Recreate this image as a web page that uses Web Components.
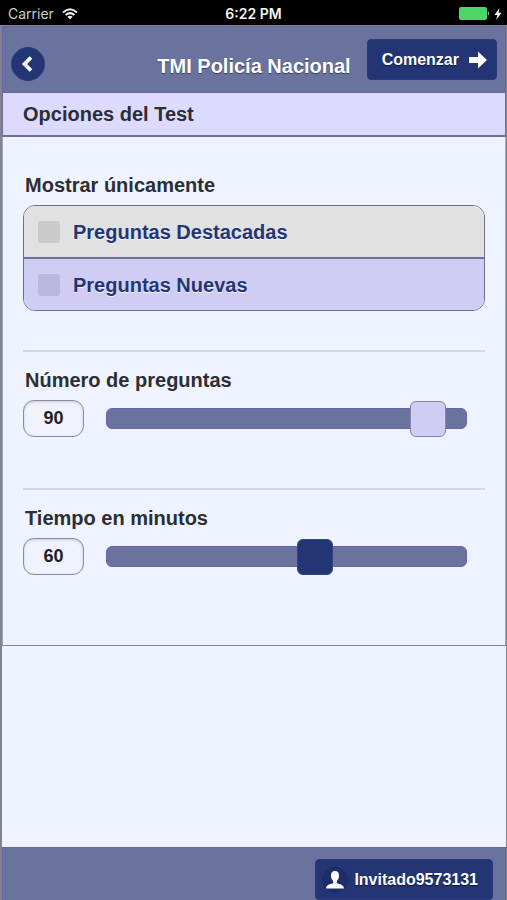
<!DOCTYPE html>
<html lang="es">
<head>
<meta charset="utf-8">
<meta name="viewport" content="width=device-width, initial-scale=1">
<title>TMI Policía Nacional</title>
<style>
  :root {
    --bar: #6a739e;
    --bar-edge: #6a63ab;
    --navy: #233575;
    --page: #eef3ff;
    --strip: #dcdbff;
    --lilac: #d0cdf5;
    --edge: #716f98;
    --frame: #83838f;
    --ink: #2c2e33;
  }
  body { margin: 0; background: var(--page); color: var(--ink); font: bold 20px/24px "Liberation Sans", Arial, sans-serif; }
</style>
</head>
<body>
<test-app>
  <status-bar slot="status" carrier="Carrier" time="6:22 PM"></status-bar>
  <app-header slot="header">
    <icon-button slot="back" icon="back" label="Volver"></icon-button>
    TMI Policía Nacional
    <icon-button slot="action" icon="forward">Comenzar</icon-button>
  </app-header>
  <options-panel>
    <span slot="heading">Opciones del Test</span>
    <option-section>
      <span slot="title">Mostrar únicamente</span>
      <check-list>
        <check-row>Preguntas Destacadas</check-row>
        <check-row class="selected">Preguntas Nuevas</check-row>
      </check-list>
    </option-section>
    <option-section class="ruled">
      <span slot="title">Número de preguntas</span>
      <value-slider value="90" label="Número de preguntas" class="light"></value-slider>
    </option-section>
    <option-section class="ruled">
      <span slot="title">Tiempo en minutos</span>
      <value-slider value="60" label="Tiempo en minutos"></value-slider>
    </option-section>
  </options-panel>
  <app-footer slot="footer">
    <icon-button icon="user">Invitado9573131</icon-button>
  </app-footer>
</test-app>
<script>
const define = (name, render, ready) => customElements.define(name, class extends HTMLElement {
  constructor() {
    super();
    this.attachShadow({ mode: "open" }).innerHTML =
      "<style>*{box-sizing:border-box}:host{display:block;box-sizing:border-box}</style>" + render(this);
    if (ready) ready(this.shadowRoot, this);
  }
});

define("test-app", () => `
  <style>
    :host { display: flex; flex-direction: column; min-height: 100vh; }
    .frame { flex: 1; display: flex; flex-direction: column; border: solid var(--frame); border-width: 1px 1px 0 2px; }
    main { flex: 1; }
  </style>
  <slot name="status"></slot>
  <div class="frame">
    <slot name="header"></slot>
    <main><slot></slot></main>
    <slot name="footer"></slot>
  </div>`);

define("status-bar", el => `
  <style>
    :host { display: grid; grid-template-columns: 1fr auto 1fr; align-items: center; height: 25px; padding: 2px 5px 0 5px;
      background: #000; color: #f4f4f4; font: 14px/20px Inter, Roboto, sans-serif; }
    .left, .right { display: flex; align-items: center; gap: 8px; }
    .left { color: #ccc; padding-left: 3px; }
    .right { justify-content: flex-end; gap: 4px; }
    .time { font-weight: 600; }
    svg { display: block; }
  </style>
  <div class="left"><span>${el.getAttribute("carrier")}</span>
    <svg width="16" height="12" viewBox="0 0 16 12" fill="none" stroke="#eee" stroke-width="2">
      <path d="M1 4.4Q8-2 15 4.4M3.6 7Q8 3.2 12.4 7"/><path d="M8 11.4L5.4 8.8Q8 6.8 10.6 8.8Z" fill="#eee" stroke="none"/></svg></div>
  <span class="time">${el.getAttribute("time")}</span>
  <div class="right">
    <svg width="31" height="13" viewBox="0 0 31 13"><rect width="28" height="13" rx="2" fill="#4bd763"/><path d="M29 4q2 2.500 0 5z" fill="#bbb"/></svg>
    <svg width="8" height="12" viewBox="0 0 8 12"><path d="M5.500 0L.5 7H3.400L2.200 12L7.500 4.800H4.600Z" fill="#fff"/></svg>
  </div>`);

define("app-header", () => `
  <style>
    :host { display: grid; grid-template-columns: 1fr auto 1fr; align-items: start; height: 67px; padding: 12px 8px 0;
      background: var(--bar); border: 1px solid var(--bar-edge); color: #fff; text-shadow: 0 1px 1px #333a5c; }
    h1 { margin: 0; padding-top: 15px; font: inherit; white-space: nowrap; }
    .back { padding-top: 8px; }
    .action { justify-self: end; }
  </style>
  <div class="back"><slot name="back"></slot></div>
  <h1><slot></slot></h1>
  <div class="action"><slot name="action"></slot></div>`);

const icons = {
  back: `<svg width="14" height="18" viewBox="0 0 14 18"><path d="M11 2.500L4.500 9L11 15.500" fill="none" stroke="#fff" stroke-width="3.800"/></svg>`,
  forward: `<svg width="18" height="18" viewBox="0 0 18 18"><path d="M0 6H9V0.500L18 9L9 17.500V12H0Z" fill="#fff"/></svg>`,
  user: `<svg width="18" height="18" viewBox="0 0 18 18"><path d="M9 0C6 0 4.800 2 5 5C5.100 7.200 6 9 7.200 10V12.200C4 13 .2 13.800 0 17.500H18C17.800 13.800 14 13 10.800 12.200V10C12 9 12.900 7.200 13 5C13.200 2 12 0 9 0Z" fill="#fff"/></svg>`
};

define("icon-button", el => `
  <style>
    button { display: flex; align-items: center; gap: 10px; height: 41px; padding: 0 9px 0 14px; border: 1px solid #283a7c; border-radius: 4px;
      background: var(--navy); color: #fff; font: bold 16px/20px "Liberation Sans", Arial, sans-serif; text-shadow: 0 1px 1px #0b1438; }
    button.user { gap: 6px; padding: 0 14px 0 6px; }
    button.back { width: 34px; height: 34px; padding: 0 3px 0 0; justify-content: center; border-radius: 50%; }
    .disc { padding: 4px; border-radius: 50%; background: #1d2d68; }
    svg { display: block; flex: none; }
  </style>
  <button type="button" class="${el.getAttribute("icon")}" ${el.hasAttribute("label") ? `aria-label="${el.getAttribute("label")}"` : ""}>
    ${el.getAttribute("icon") === "forward" ? `<slot></slot>${icons.forward}`
      : el.getAttribute("icon") === "user" ? `<span class="disc">${icons.user}</span><slot></slot>` : icons.back}
  </button>`);

define("options-panel", () => `
  <style>
    :host { border-bottom: 1px solid var(--frame); }
    h2 { margin: 0; padding: 9px 20px; font: inherit; background: var(--strip); border: 1px solid var(--edge); border-top: 0; border-bottom-width: 2px; }
    .body { padding: 36px 20px 58px; border: solid #a5a5b2; border-width: 0 1px; display: grid; gap: 39px; }
  </style>
  <h2><slot name="heading"></slot></h2>
  <div class="body"><slot></slot></div>`);

define("option-section", () => `
  <style>
    :host(.ruled) { border-top: 2px solid #d3d7e8; padding-top: 16px; min-height: 99px; }
    h3 { margin: 0 0 8px; padding-left: 2px; font: inherit; }
  </style>
  <h3><slot name="title"></slot></h3>
  <slot></slot>`);

define("check-list", () => `
  <style>:host { border: 1px solid var(--edge); border-radius: 12px; overflow: hidden; }</style>
  <slot></slot>`);

define("check-row", () => `
  <style>
    :host { background: #e1e1e1; color: var(--navy); }
    :host(.selected) { background: var(--lilac); border-top: 2px solid var(--edge); }
    label { display: flex; align-items: center; gap: 13px; height: 51px; padding: 0 14px; text-shadow: 0 1px 0 #f4f4f4; }
    input { appearance: none; width: 22px; height: 22px; margin: 0; border-radius: 3px; background: rgba(0, 0, 0, .1); }
    input:checked { background: var(--navy); }
  </style>
  <label><input type="checkbox"><slot></slot></label>`);

define("value-slider", el => `
  <style>
    :host { display: flex; align-items: center; gap: 22px; padding-right: 18px; --thumb: var(--navy); --thumb-edge: #35477f; }
    :host(.light) { --thumb: var(--lilac); --thumb-edge: #8482ac; }
    .value { width: 61px; height: 37px; padding: 0; text-align: center; border: 1px solid #8c8c98; border-radius: 11px; background: #f0f3ff;
      box-shadow: inset 0 1px 3px #c9ccd8; color: #222; font: bold 18px/24px "Liberation Sans", Arial, sans-serif; }
    .track { flex: 1; display: flex; align-items: center; height: 21px; border-radius: 6px; background: var(--bar); border: 1px solid var(--bar-edge); min-width: 0; }
    .range { appearance: none; flex: 1; min-width: 0; height: 36px; margin: 0 -18px; background: transparent; }
    .range::-webkit-slider-thumb { appearance: none; width: 36px; height: 36px; border-radius: 6px; background: var(--thumb); border: 1px solid var(--thumb-edge); }
  </style>
  <input class="value" type="text" inputmode="numeric" aria-label="${el.getAttribute("label")}" value="${el.getAttribute("value")}">
  <div class="track"><input class="range" type="range" min="5" max="100" aria-label="${el.getAttribute("label")}" value="${el.getAttribute("value")}"></div>`,
  root => {
    const [box, range] = root.querySelectorAll("input");
    range.addEventListener("input", () => { box.value = range.value; });
    box.addEventListener("change", () => { range.value = box.value; box.value = range.value; });
  });

define("app-footer", () => `
  <style>:host { display: flex; justify-content: flex-end; padding: 11px 12px 0; background: var(--bar); border: 1px solid var(--bar-edge); border-bottom: 0; }</style>
  <slot></slot>`);
</script>
</body>
</html>
